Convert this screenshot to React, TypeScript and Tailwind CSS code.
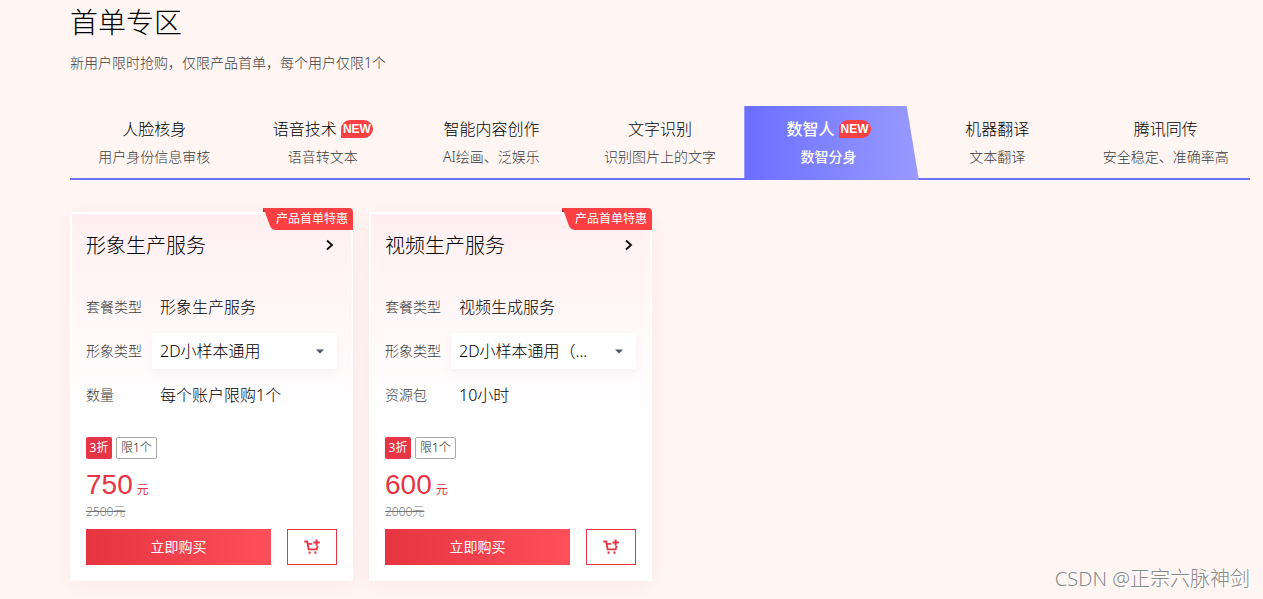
import { useState } from "react";

type Tab = { title: string; desc: string; isNew?: boolean };

const tabs: Tab[] = [
  { title: "人脸核身", desc: "用户身份信息审核" },
  { title: "语音技术", desc: "语音转文本", isNew: true },
  { title: "智能内容创作", desc: "AI绘画、泛娱乐" },
  { title: "文字识别", desc: "识别图片上的文字" },
  { title: "数智人", desc: "数智分身", isNew: true },
  { title: "机器翻译", desc: "文本翻译" },
  { title: "腾讯同传", desc: "安全稳定、准确率高" },
];

type Product = {
  id: string;
  name: string;
  plan: string;
  option: string;
  amountLabel: string;
  amount: string;
  price: string;
  original: string;
};

const products: Product[] = [
  {
    id: "image",
    name: "形象生产服务",
    plan: "形象生产服务",
    option: "2D小样本通用",
    amountLabel: "数量",
    amount: "每个账户限购1个",
    price: "750",
    original: "2500元",
  },
  {
    id: "video",
    name: "视频生产服务",
    plan: "视频生成服务",
    option: "2D小样本通用（...",
    amountLabel: "资源包",
    amount: "10小时",
    price: "600",
    original: "2000元",
  },
];

function TabItem({ tab, active, onSelect }: { tab: Tab; active: boolean; onSelect: () => void }) {
  return (
    <button
      type="button"
      role="tab"
      aria-selected={active}
      onClick={onSelect}
      className={`relative flex h-[74px] min-w-0 flex-1 flex-col items-center pt-[11px] ${active ? "text-white" : "text-black"}`}
    >
      {active && (
        <span className="absolute inset-y-0 left-0 -right-[6px] bg-linear-to-r from-[#6b6eff] to-[#9a99ff] [clip-path:polygon(0_0,93%_0,100%_100%,0_100%)]" />
      )}
      <span className={`relative flex items-center gap-1 text-base leading-6 whitespace-nowrap ${active ? "font-medium" : ""}`}>
        {tab.title}
        {tab.isNew && (
          <span className="flex h-[18px] w-8 items-center justify-center rounded-[9px] rounded-bl-none bg-[#fb4044] font-['Liberation_Sans',sans-serif] text-xs leading-none font-bold text-white">
            NEW
          </span>
        )}
      </span>
      <span className={`relative mt-1 text-sm leading-6 whitespace-nowrap ${active ? "font-medium" : "text-[#3c3c3c]"}`}>
        {tab.desc}
      </span>
    </button>
  );
}

function CartIcon() {
  return (
    <svg width="16" height="16" viewBox="0 0 16 16" fill="none" stroke="#e63544" aria-hidden="true">
      <path d="M0.3 2.5H3.2L4.7 10.4H12.6L13.6 7" strokeWidth="1.9" />
      <path d="M3.6 4.9H8.3" strokeWidth="1.7" />
      <path d="M12.6 0.6v6.2M9.4 3.6h6.4" strokeWidth="2" />
      <path d="M4.6 13.6h2M10.4 13.6h2" strokeWidth="2.2" />
    </svg>
  );
}

function ProductCard({ product }: { product: Product }) {
  const selectId = `${product.id}-type`;
  return (
    <article className="relative w-[283px] border-2 border-white bg-linear-to-b from-[#ffeff2] to-white to-[56%] px-3.5 pt-4 pb-3.5 shadow-[0_4px_20px_rgba(240,150,140,0.14)]">
      <div className="absolute -top-1.5 -right-0.5 flex h-[22px] w-[90px] items-center justify-end pr-[5px] text-xs font-normal text-white">
        <svg className="absolute inset-0 size-full" viewBox="0 0 90 22" aria-hidden="true">
          <path d="M0 0h86q4 0 4 4v18H13q-4 0-6-4L2 4H0z" fill="#fb4044" />
          <path d="M0 0l2 4H0z" fill="#c9252d" />
        </svg>
        <span className="relative leading-[22px] whitespace-nowrap">产品首单特惠</span>
      </div>

      <h2 className="text-xl leading-8">
        <a href="#detail" className="flex items-center justify-between">
          {product.name}
          <svg className="mr-[3px] mb-0.5" width="8" height="12" viewBox="0 0 8 12" fill="none" stroke="#111" strokeWidth="1.9" aria-hidden="true">
            <path d="M1 1.5L6 6L1 10.5" />
          </svg>
        </a>
      </h2>

      <div className="mt-[27px] flex flex-col gap-2">
        <div className="flex h-9 items-center">
          <span className="w-[66px] text-sm text-[#3c3c3c]">套餐类型</span>
          <span className="pl-2 text-base">{product.plan}</span>
        </div>
        <div className="flex h-9 items-center">
          <label htmlFor={selectId} className="w-[66px] text-sm text-[#3c3c3c]">
            形象类型
          </label>
          <div className="relative flex-1">
            <select
              id={selectId}
              className="h-9 w-full appearance-none rounded-xs bg-white pr-8 pl-2 text-base text-black shadow-[0_4px_10px_rgba(50,30,60,0.05)]"
            >
              <option>{product.option}</option>
            </select>
            <svg className="pointer-events-none absolute top-4 right-[13px]" width="8" height="5" viewBox="0 0 8 5" aria-hidden="true">
              <path d="M0 0.5h8L4 4.5z" fill="#495570" />
            </svg>
          </div>
        </div>
        <div className="flex h-9 items-center">
          <span className="w-[66px] text-sm text-[#3c3c3c]">{product.amountLabel}</span>
          <span className="pl-2 text-base">{product.amount}</span>
        </div>
      </div>

      <div className="mt-6 flex gap-1 text-xs">
        <span className="flex h-[22px] w-[26px] items-center justify-center rounded-xs bg-[#e63544] font-normal text-white">3折</span>
        <span className="flex h-[22px] items-center rounded-xs border border-[#aaa] px-1 text-[#222]">限1个</span>
      </div>

      <p className="mt-[9px] flex h-[34px] items-baseline gap-1 text-[#e63544]">
        <span className="font-['Liberation_Sans',sans-serif] text-[28px] leading-[34px] font-normal">{product.price}</span>
        <span className="text-xs font-normal">元</span>
      </p>
      <p className="text-xs leading-5 text-[#777] line-through">{product.original}</p>

      <div className="mt-[7px] flex gap-4">
        <button type="button" className="h-9 flex-1 bg-linear-to-r from-[#e63440] to-[#ff4f5a] text-sm font-normal text-white">
          立即购买
        </button>
        <button type="button" aria-label="加入购物车" className="flex h-9 w-[50px] items-center justify-center border border-[#e63544] bg-white">
          <CartIcon />
        </button>
      </div>
    </article>
  );
}

export default function App() {
  const [active, setActive] = useState(4);
  return (
    <main className="relative min-h-screen bg-[#fff6f4] pr-[13px] pb-[18px] pl-[70px] font-['Noto_Sans','Noto_Sans_CJK_SC',sans-serif] font-light text-black">
      <h1 className="text-[28px] leading-[44px]">首单专区</h1>
      <p className="mt-2 text-sm leading-[22px] text-[#3c3c3c]">新用户限时抢购，仅限产品首单，每个用户仅限1个</p>

      <div role="tablist" className="mt-8 flex bg-linear-to-t from-[#6d70ff] from-[2px] to-transparent to-[2px]">
        {tabs.map((tab, i) => (
          <TabItem key={tab.title} tab={tab} active={i === active} onSelect={() => setActive(i)} />
        ))}
      </div>

      <section className="mt-8 flex flex-wrap gap-4">
        {products.map((product) => (
          <ProductCard key={product.id} product={product} />
        ))}
      </section>

      <p className="absolute right-[13px] bottom-1 text-xl leading-8 text-[#888] [text-shadow:1px_1px_0_#fff]">
        CSDN @正宗六脉神剑
      </p>
    </main>
  );
}
